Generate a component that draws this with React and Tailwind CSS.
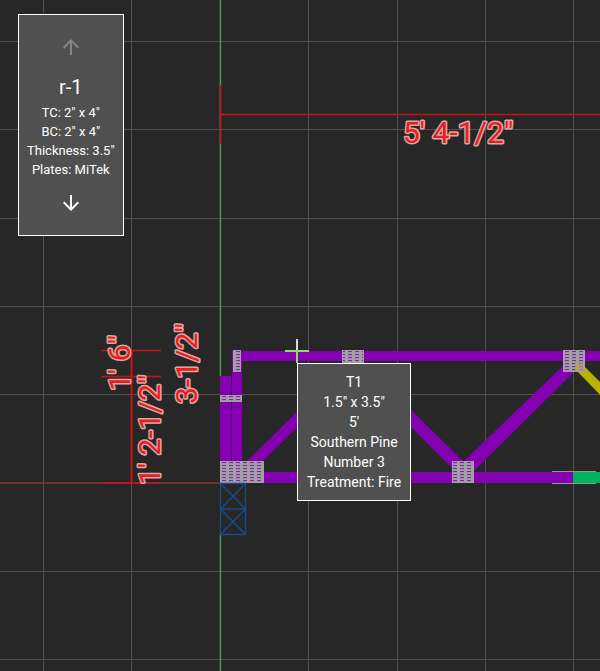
import React from 'react'
import { MdArrowDownward, MdArrowUpward } from 'react-icons/md'

const GRID_X = [43, 131, 308, 397, 485, 573]
const GRID_Y = [41, 129, 218, 306, 394, 571, 659]

const MEMBERS = [
  { points: '220,376 231,376 231,483 220,483' },
  { points: '232,351 242,351 242,483 232,483' },
  { points: '232,351 2000,351 2000,361 232,361' },
  { points: '220,472 573,472 573,483 220,483' },
  { points: '246,462 356,354 364,362 262,462' },
  { points: '346,362 354,354 464,462 452,468' },
  { points: '463,462 567,362 578,368 474,471' },
  { points: '573,472 2000,472 2000,483 573,483', color: '#00b35f' },
  { points: '574,368 584,366 684,466 676,473', color: '#b9b300' },
]

const PLATES = [
  { x: 233, y: 350, width: 8, height: 22 },
  { x: 342, y: 350, width: 22, height: 13 },
  { x: 563, y: 350, width: 22, height: 22 },
  { x: 220, y: 395, width: 22, height: 7 },
  { x: 220, y: 461, width: 44, height: 22 },
  { x: 452, y: 461, width: 22, height: 22 },
]

const TRUSS_LINES = ['TC: 2" x 4"', 'BC: 2" x 4"', 'Thickness: 3.5"', 'Plates: MiTek']

const MEMBER_LINES = ['T1', '1.5" x 3.5"', "5'", 'Southern Pine', 'Number 3', 'Treatment: Fire']

function Grid() {
  return (
    <g stroke="#505050" shapeRendering="crispEdges">
      {GRID_X.map((x) => (
        <line key={x} x1={x + 0.5} x2={x + 0.5} y1="0" y2="100%" />
      ))}
      {GRID_Y.map((y) => (
        <line key={y} x1="0" x2="100%" y1={y + 0.5} y2={y + 0.5} />
      ))}
    </g>
  )
}

function Plate({ x, y, width, height }) {
  return (
    <g>
      <rect x={x} y={y} width={width} height={height} fill="url(#teeth)" />
      <rect
        x={x + 0.5}
        y={y + 0.5}
        width={width - 1}
        height={height - 1}
        fill="none"
        stroke="#a3a0a5"
      />
    </g>
  )
}

function DimensionText({ x, y, vertical, children }) {
  return (
    <text
      x={x}
      y={y}
      transform={vertical ? `rotate(-90 ${x} ${y})` : undefined}
      className="font-['Roboto',sans-serif] text-[30px]"
      fill="#eb1c1c"
      stroke="#dba6a6"
      strokeWidth="3"
      strokeLinejoin="round"
      paintOrder="stroke"
    >
      {children}
    </text>
  )
}

function TrussDrawing() {
  return (
    <svg className="absolute inset-0 h-full w-full" role="img" aria-label="Truss drawing">
      <defs>
        <pattern id="teeth" x="220" y="461" width="7" height="3" patternUnits="userSpaceOnUse">
          <rect width="7" height="3" fill="#a3a0a5" />
          <rect x="2" y="1" width="4" height="1" fill="#773095" />
          <rect x="2" y="2" width="4" height="1" fill="#a98bb5" />
        </pattern>
      </defs>

      <Grid />

      <g strokeWidth="1.5">
        <line x1="0" x2="220" y1="483" y2="483" stroke="#8a3434" />
        <line x1="220.4" x2="220.4" y1="0" y2="376" stroke="#459c4c" />
        <line x1="220.4" x2="220.4" y1="534" y2="100%" stroke="#459c4c" />
      </g>

      {MEMBERS.map(({ points, color = '#8500b3' }) => (
        <polygon key={points} points={points} fill={color} />
      ))}
      <path d="M231.5 376V462" stroke="#3f0a50" strokeWidth="1" />
      <path d="M552 471.5h44M552 483.5h44" stroke="#969496" />

      {PLATES.map((plate) => (
        <Plate key={`${plate.x}-${plate.y}`} {...plate} />
      ))}
      <path d="M575 363h8v7h-8z" fill="#b9a83c" opacity="0.6" />

      {/* bearing */}
      <g fill="none" stroke="#194a88" strokeWidth="1.4">
        <path d="M220.5 483.5h25v51h-25zM220.5 509h25" />
        <path d="M220.5 483.5l25 25.5l-25 25.5M245.5 483.5l-25 25.5l25 25.5" />
      </g>

      {/* dimension lines */}
      <g stroke="#cc1212" strokeWidth="1.5">
        <path d="M220.4 85V144" />
        <line x1="220" x2="100%" y1="114.6" y2="114.6" />
        <path d="M131.6 350V483" strokeWidth="2" />
        <path d="M102 350.5h59M102 376.4h59M102 483h59" />
      </g>
      <DimensionText x={403} y={143}>5' 4-1/2"</DimensionText>
      <DimensionText x={130} y={391} vertical>1' 6"</DimensionText>
      <DimensionText x={160} y={485} vertical>1' 2-1/2"</DimensionText>
      <DimensionText x={197} y={404} vertical>3-1/2"</DimensionText>

      {/* cursor */}
      <path d="M297 339v12" stroke="#d9d9d9" strokeWidth="2" />
      <path d="M297 351v12M285 351h24" stroke="#8fdc6a" strokeWidth="2" />
    </svg>
  )
}

function TrussPanel() {
  return (
    <section className="absolute left-[18px] top-[14px] flex flex-col items-center border border-white bg-[#505050] p-2 text-center text-white">
      <button type="button" disabled aria-label="Previous truss" className="p-3 text-[#848484]">
        <MdArrowUpward size={24} />
      </button>
      <h1 className="text-xl leading-8">r-1</h1>
      {TRUSS_LINES.map((line) => (
        <p key={line} className="text-[13px] leading-[19px] whitespace-nowrap">{line}</p>
      ))}
      <button type="button" aria-label="Next truss" className="p-3">
        <MdArrowDownward size={24} />
      </button>
    </section>
  )
}

function MemberTooltip() {
  return (
    <div
      role="tooltip"
      className="absolute left-[297px] top-[363px] border border-white bg-[#505050] px-[9px] py-2 text-center text-sm leading-5 whitespace-nowrap text-white"
    >
      {MEMBER_LINES.map((line) => (
        <p key={line}>{line}</p>
      ))}
    </div>
  )
}

export default function App() {
  return (
    <main className="relative min-h-screen overflow-hidden bg-[#272727] font-['Roboto',sans-serif]">
      <TrussDrawing />
      <TrussPanel />
      <MemberTooltip />
    </main>
  )
}
